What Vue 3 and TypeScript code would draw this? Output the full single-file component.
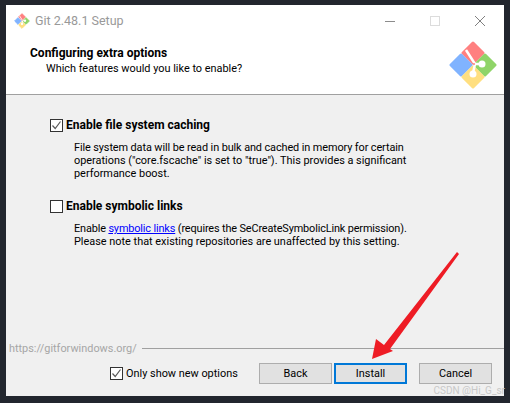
<script setup lang="ts">
const logoParts = [
  { fill: '#ff8080', points: '24,2 34,12 24,22 14,12' },
  { fill: '#80b3ff', points: '2,24 12,14 22,24 12,34' },
  { fill: '#8fd468', points: '46,24 36,14 26,24 36,34' },
  { fill: '#ffdf80', points: '24,46 14,36 24,26 34,36' },
]
</script>

<template>
  <div class="frame">
    <svg width="0" height="0" class="defs" aria-hidden="true">
      <symbol id="git-logo" viewBox="0 0 48 48">
        <polygon
          v-for="part in logoParts"
          :key="part.fill"
          :points="part.points"
          :fill="part.fill"
          :stroke="part.fill"
          stroke-width="3"
          stroke-linejoin="round"
        />
        <path d="M17 9 L26 23 L33 23 M26 23 L24 32" stroke="#fff" stroke-width="2.5" fill="none" />
        <circle cx="33" cy="23" r="3.5" fill="#fff" />
        <circle cx="24" cy="33" r="3.5" fill="#fff" />
        <circle cx="25" cy="23" r="1" fill="#ff8080" />
      </symbol>
    </svg>

    <div class="window">
      <div class="titlebar">
        <svg class="title-icon" width="16" height="16"><use href="#git-logo" /></svg>
        <span class="title-text">Git 2.48.1 Setup</span>
        <div class="win-controls">
          <svg width="10" height="10" viewBox="0 0 10 10"><path d="M0 5.5H10" stroke="#8c8c8c" /></svg>
          <svg width="10" height="10" viewBox="0 0 10 10"><rect x="0.5" y="0.5" width="9" height="9" fill="none" stroke="#dcdcdc" /></svg>
          <svg width="10" height="10" viewBox="0 0 10 10"><path d="M0 0L10 10M10 0L0 10" stroke="#808080" /></svg>
        </div>
      </div>

      <header class="header">
        <div class="header-text">
          <h1>Configuring extra options</h1>
          <p>Which features would you like to enable?</p>
        </div>
        <svg class="header-logo" width="48" height="48"><use href="#git-logo" /></svg>
      </header>

      <main class="content">
        <section class="option first">
          <label class="check-row">
            <span class="box">
              <svg width="11" height="11" viewBox="0 0 11 11"><path d="M1.5 5.5L4.2 8.5L9.5 1.5" fill="none" stroke="#595959" stroke-width="1.2" /></svg>
            </span>
            <strong>Enable file system caching</strong>
          </label>
          <p class="desc">
            <span class="tight-1">File system data will be read in bulk and cached in memory for certain</span><br />
            operations ("core.fscache" is set to "true"). This provides a significant<br />
            performance boost.
          </p>
        </section>

        <section class="option second">
          <label class="check-row">
            <span class="box"></span>
            <strong>Enable symbolic links</strong>
          </label>
          <p class="desc">
            <span class="tight-2">Enable <a href="#">symbolic links</a> (requires the SeCreateSymbolicLink permission).</span><br />
            Please note that existing repositories are unaffected by this setting.
          </p>
        </section>
      </main>

      <footer class="footer">
        <div class="url-row">
          <span class="url">https://gitforwindows.org/</span>
          <span class="rule"></span>
        </div>
        <div class="actions">
          <label class="check-row small">
            <span class="box">
              <svg width="11" height="11" viewBox="0 0 11 11"><path d="M1.5 5.5L4.2 8.5L9.5 1.5" fill="none" stroke="#595959" stroke-width="1.2" /></svg>
            </span>
            <span>Only show new options</span>
          </label>
          <button class="btn back">Back</button>
          <button class="btn primary">Install</button>
          <button class="btn cancel">Cancel</button>
        </div>
      </footer>
    </div>

    <svg class="arrow" width="510" height="403" viewBox="0 0 510 403">
      <polygon points="372,359 376,339 384,345 457,252 459,254 390,349 393,351" fill="#ee1c25" />
    </svg>
    <span class="watermark">CSDN @Hi_G_sr</span>
  </div>
</template>

<style>
html,
body {
  margin: 0;
  background: #22262e;
}
</style>

<style scoped>
.frame {
  position: relative;
  width: 510px;
  height: 403px;
  box-sizing: border-box;
  padding: 5px 6px 7px;
  background: #22262e;
  overflow: hidden;
  font-family: Roboto, "Noto Sans", sans-serif;
  font-size: 10.9px;
  color: #000;
}

.defs {
  position: absolute;
}

.window {
  height: 100%;
  display: flex;
  flex-direction: column;
  background: #f0f0f0;
}

.titlebar {
  height: 31px;
  flex: none;
  display: flex;
  align-items: center;
  padding-left: 8px;
  background: #fff;
}

.title-icon {
  flex: none;
  margin-top: 1px;
}

.title-text {
  margin-left: 5px;
  font-size: 12.5px;
  color: #999;
}

.win-controls {
  margin-left: auto;
  display: flex;
  gap: 35px;
  padding-right: 19px;
}

.header {
  height: 58px;
  flex: none;
  display: flex;
  justify-content: space-between;
  background: #fff;
  border-bottom: 1px solid #a0a0a0;
}

.header-text {
  padding: 9px 0 0 24px;
}

.header h1 {
  margin: 0;
  font-size: 12px;
  line-height: 16px;
  font-weight: 700;
}

.header p {
  margin: 0;
  padding-left: 16px;
  line-height: 16px;
}

.header-logo {
  margin: 5px 7px 0 0;
}

.content {
  flex: 1;
  padding-left: 44px;
}

.option.first {
  padding-top: 24px;
}

.option.second {
  padding-top: 20px;
}

.check-row {
  display: flex;
  align-items: center;
  gap: 3px;
  line-height: 13px;
  white-space: nowrap;
}

.check-row strong {
  font-size: 12px;
  font-weight: 700;
}

.box {
  width: 11px;
  height: 11px;
  flex: none;
  display: block;
  border: 1px solid #333;
  background: #fff;
}

.box svg {
  display: block;
}

.desc {
  margin: 9px 0 0 24px;
  line-height: 13px;
}

.tight-1 {
  letter-spacing: -0.1px;
}

.tight-2 {
  letter-spacing: -0.14px;
}

.desc a {
  color: #0000ff;
  text-decoration: underline;
}

.footer {
  flex: none;
  height: 55px;
}

.url-row {
  display: flex;
  align-items: center;
  height: 14px;
  padding-left: 3px;
  gap: 5px;
}

.url {
  color: #a6a6a6;
}

.rule {
  flex: 1;
  height: 1px;
  background: #a0a0a0;
}

.actions {
  display: flex;
  align-items: center;
  margin-top: 8px;
  padding: 0 12px 0 104px;
}

.btn {
  width: 73px;
  height: 21px;
  box-sizing: border-box;
  padding: 0;
  border: 1px solid #adadad;
  background: #e1e1e1;
  font: inherit;
  color: #000;
}

.btn.back {
  margin-left: auto;
}

.btn.primary {
  margin-left: 2px;
  border: 2px solid #0078d7;
}

.btn.cancel {
  margin-left: 12px;
}

.arrow {
  position: absolute;
  left: 0;
  top: 0;
  pointer-events: none;
}

.watermark {
  position: absolute;
  right: 5px;
  top: 385px;
  font-size: 10px;
  line-height: 12px;
  color: #c8c8c8;
}
</style>
